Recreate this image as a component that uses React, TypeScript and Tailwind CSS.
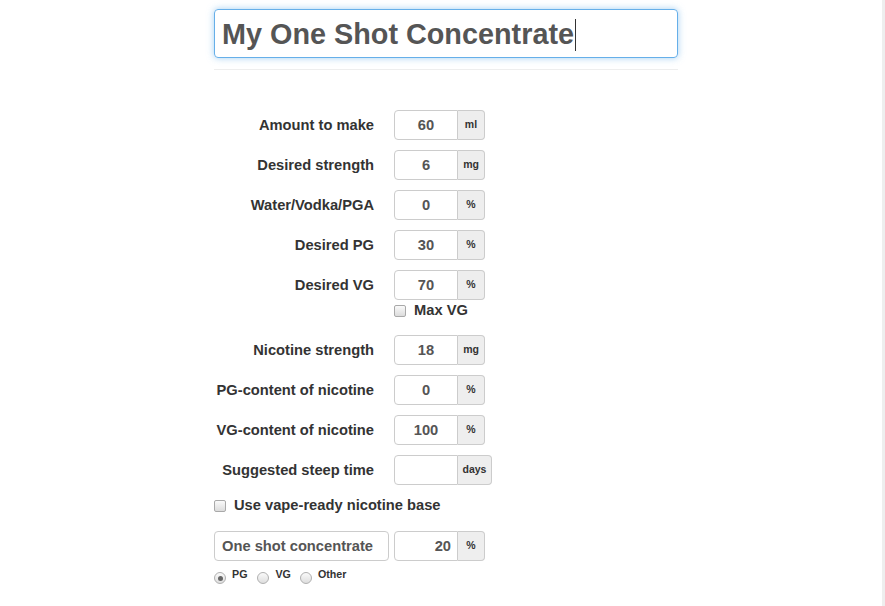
const font = { fontFamily: '"Liberation Sans", Arial, sans-serif' }

type Field = { label: string; value: string; unit: string; wide?: boolean }

const topFields: Field[] = [
  { label: "Amount to make", value: "60", unit: "ml" },
  { label: "Desired strength", value: "6", unit: "mg" },
  { label: "Water/Vodka/PGA", value: "0", unit: "%" },
  { label: "Desired PG", value: "30", unit: "%" },
  { label: "Desired VG", value: "70", unit: "%" },
]

const nicotineFields: Field[] = [
  { label: "Nicotine strength", value: "18", unit: "mg" },
  { label: "PG-content of nicotine", value: "0", unit: "%" },
  { label: "VG-content of nicotine", value: "100", unit: "%" },
  { label: "Suggested steep time", value: "", unit: "days", wide: true },
]

function Checkbox() {
  return (
    <span className="inline-block h-[12px] w-[12px] shrink-0 rounded-[2px] border border-[#a9a9a9] bg-gradient-to-b from-[#fafafa] to-[#dcdcdc]" />
  )
}

function Radio({ checked }: { checked?: boolean }) {
  return (
    <span className="mt-[4px] flex h-[12px] w-[12px] shrink-0 items-center justify-center rounded-full border border-[#b0b0b0] bg-gradient-to-b from-[#fafafa] to-[#dedede]">
      {checked && <span className="h-[5px] w-[5px] rounded-full bg-[#666]" />}
    </span>
  )
}

function UnitInput({ value, unit, wide, right }: { value: string; unit: string; wide?: boolean; right?: boolean }) {
  return (
    <div className="flex h-[30px]">
      <div
        className={`flex w-[64px] items-center rounded-l-[4px] border border-[#cccccc] bg-white text-[14.7px] font-bold text-[#555] ${
          right ? "justify-end pr-[6px]" : "justify-center"
        }`}
      >
        {value}
      </div>
      <div
        className={`flex items-center justify-center rounded-r-[4px] border border-l-0 border-[#cccccc] bg-[#eeeeee] text-[10.5px] font-bold text-[#333] ${
          wide ? "w-[34px]" : "w-[27px]"
        }`}
      >
        {unit}
      </div>
    </div>
  )
}

function Row({ field }: { field: Field }) {
  return (
    <div className="flex h-[30px] items-center">
      <div className="w-[160px] text-right text-[14.7px] font-bold text-[#333]">{field.label}</div>
      <div className="ml-[20px]">
        <UnitInput value={field.value} unit={field.unit} wide={field.wide} />
      </div>
    </div>
  )
}

export default function App() {
  return (
    <div className="flex min-h-[606px] bg-white" style={font}>
      <main className="flex-1">
        <div className="ml-[214px] w-[464px] pt-[9px]">
          <div className="flex h-[49px] items-center rounded-[4px] border border-[#66afe9] pl-[7px] pt-[2px] shadow-[0_0_7px_rgba(102,175,233,0.6)]">
            <span className="text-[28.8px] font-bold leading-none text-[#555]">My One Shot Concentrate</span>
            <span className="ml-[1px] h-[32px] w-px bg-[#333]" />
          </div>
          <div className="mt-[11px] h-px bg-[#eeeeee]" />

          <div className="mt-[40px] flex flex-col gap-[10px]">
            {topFields.map((f) => (
              <Row key={f.label} field={f} />
            ))}
          </div>

          <div className="ml-[180px] flex h-[21px] items-center gap-[8px]">
            <Checkbox />
            <span className="text-[14.7px] font-bold text-[#333]">Max VG</span>
          </div>

          <div className="mt-[14px] flex flex-col gap-[10px]">
            {nicotineFields.map((f) => (
              <Row key={f.label} field={f} />
            ))}
          </div>

          <div className="mt-[10px] flex h-[21px] items-center gap-[8px]">
            <Checkbox />
            <span className="text-[14.7px] font-bold text-[#333]">Use vape-ready nicotine base</span>
          </div>

          <div className="mt-[15px] flex items-center gap-[5px]">
            <div className="flex h-[30px] w-[175px] items-center rounded-[4px] border border-[#cccccc] pl-[7px] text-[14.7px] font-bold text-[#555]">
              One shot concentrate
            </div>
            <UnitInput value="20" unit="%" right />
          </div>

          <div className="mt-[7px] flex items-start text-[10.7px] font-bold leading-[12px] text-[#333]">
            <Radio checked />
            <span className="ml-[6px]">PG</span>
            <span className="ml-[10px]">
              <Radio />
            </span>
            <span className="ml-[6px]">VG</span>
            <span className="ml-[9px]">
              <Radio />
            </span>
            <span className="ml-[6px]">Other</span>
          </div>
        </div>
      </main>
      <div className="w-[3px] bg-[#eeeeee]" />
    </div>
  )
}
